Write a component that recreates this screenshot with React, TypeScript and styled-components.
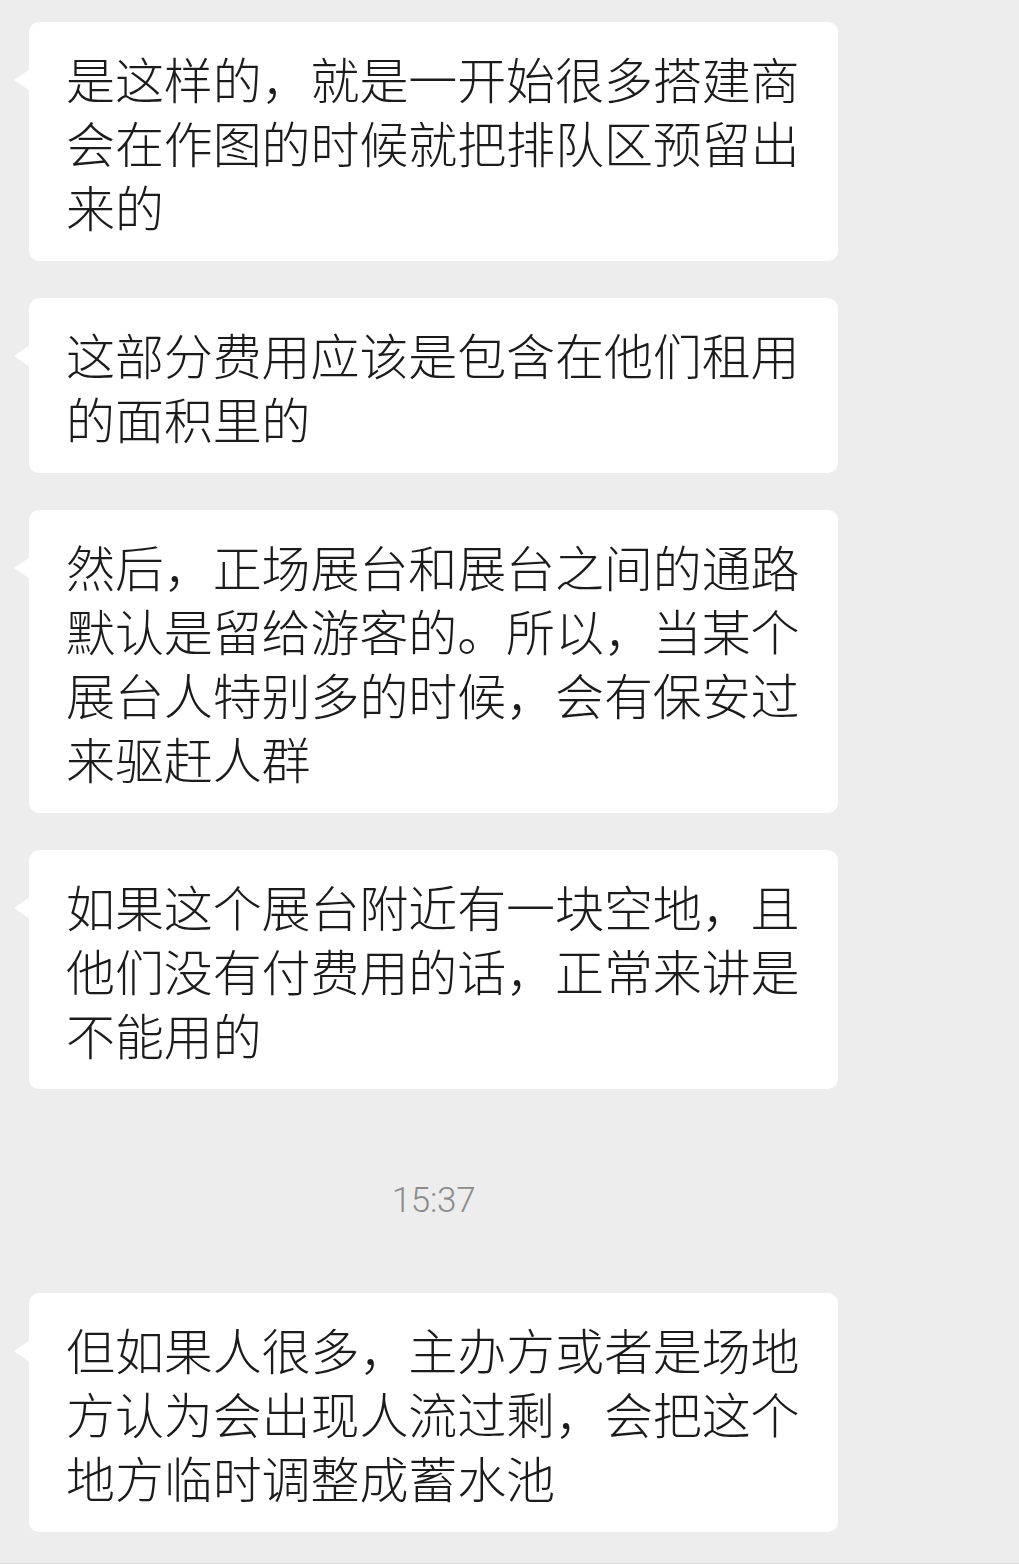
import React from "react";
import styled, { createGlobalStyle } from "styled-components";

const GlobalStyle = createGlobalStyle`
  html, body {
    margin: 0;
    padding: 0;
    background: #ededed;
  }
  * { box-sizing: border-box; }
`;

const Page = styled.div`
  width: 1019px;
  height: 1564px;
  background: #ededed;
  border-bottom: 1px solid #d9d9d9;
  padding: 22px 0 0 29px;
  overflow: hidden;
`;

const Column = styled.div`
  width: 809px;
  display: flex;
  flex-direction: column;
  gap: 37px;
`;

const Bubble = styled.div`
  position: relative;
  background: #ffffff;
  border-radius: 10px;
  padding: 23.5px 36px 23.5px 37px;
  font-family: "Noto Sans CJK SC", "Noto Sans", sans-serif;
  font-weight: 300;
  font-size: 49px;
  line-height: 64px;
  color: #1b1b1b;
  letter-spacing: -0.1px;

  &::before {
    content: "";
    position: absolute;
    left: -15px;
    top: 47px;
    width: 16px;
    height: 22px;
    background: #ffffff;
    clip-path: polygon(100% 0, 0 50%, 100% 100%);
  }
`;

const Timestamp = styled.div`
  padding: 55px 0 35px;
  text-align: center;
  font-family: Roboto, "Liberation Sans", sans-serif;
  font-weight: 300;
  font-size: 35px;
  line-height: 40px;
  color: #8c8c8c;
  letter-spacing: -0.3px;
`;

const messages = [
  "是这样的，就是一开始很多搭建商会在作图的时候就把排队区预留出来的",
  "这部分费用应该是包含在他们租用的面积里的",
  "然后，正场展台和展台之间的通路默认是留给游客的。所以，当某个展台人特别多的时候，会有保安过来驱赶人群",
  "如果这个展台附近有一块空地，且他们没有付费用的话，正常来讲是不能用的",
];

const last = "但如果人很多，主办方或者是场地方认为会出现人流过剩，会把这个地方临时调整成蓄水池";

export default function App() {
  return (
    <>
      <GlobalStyle />
      <Page>
        <Column>
          {messages.map((m, i) => (
            <Bubble key={i}>{m}</Bubble>
          ))}
          <Timestamp>15:37</Timestamp>
          <Bubble>{last}</Bubble>
        </Column>
      </Page>
    </>
  );
}
